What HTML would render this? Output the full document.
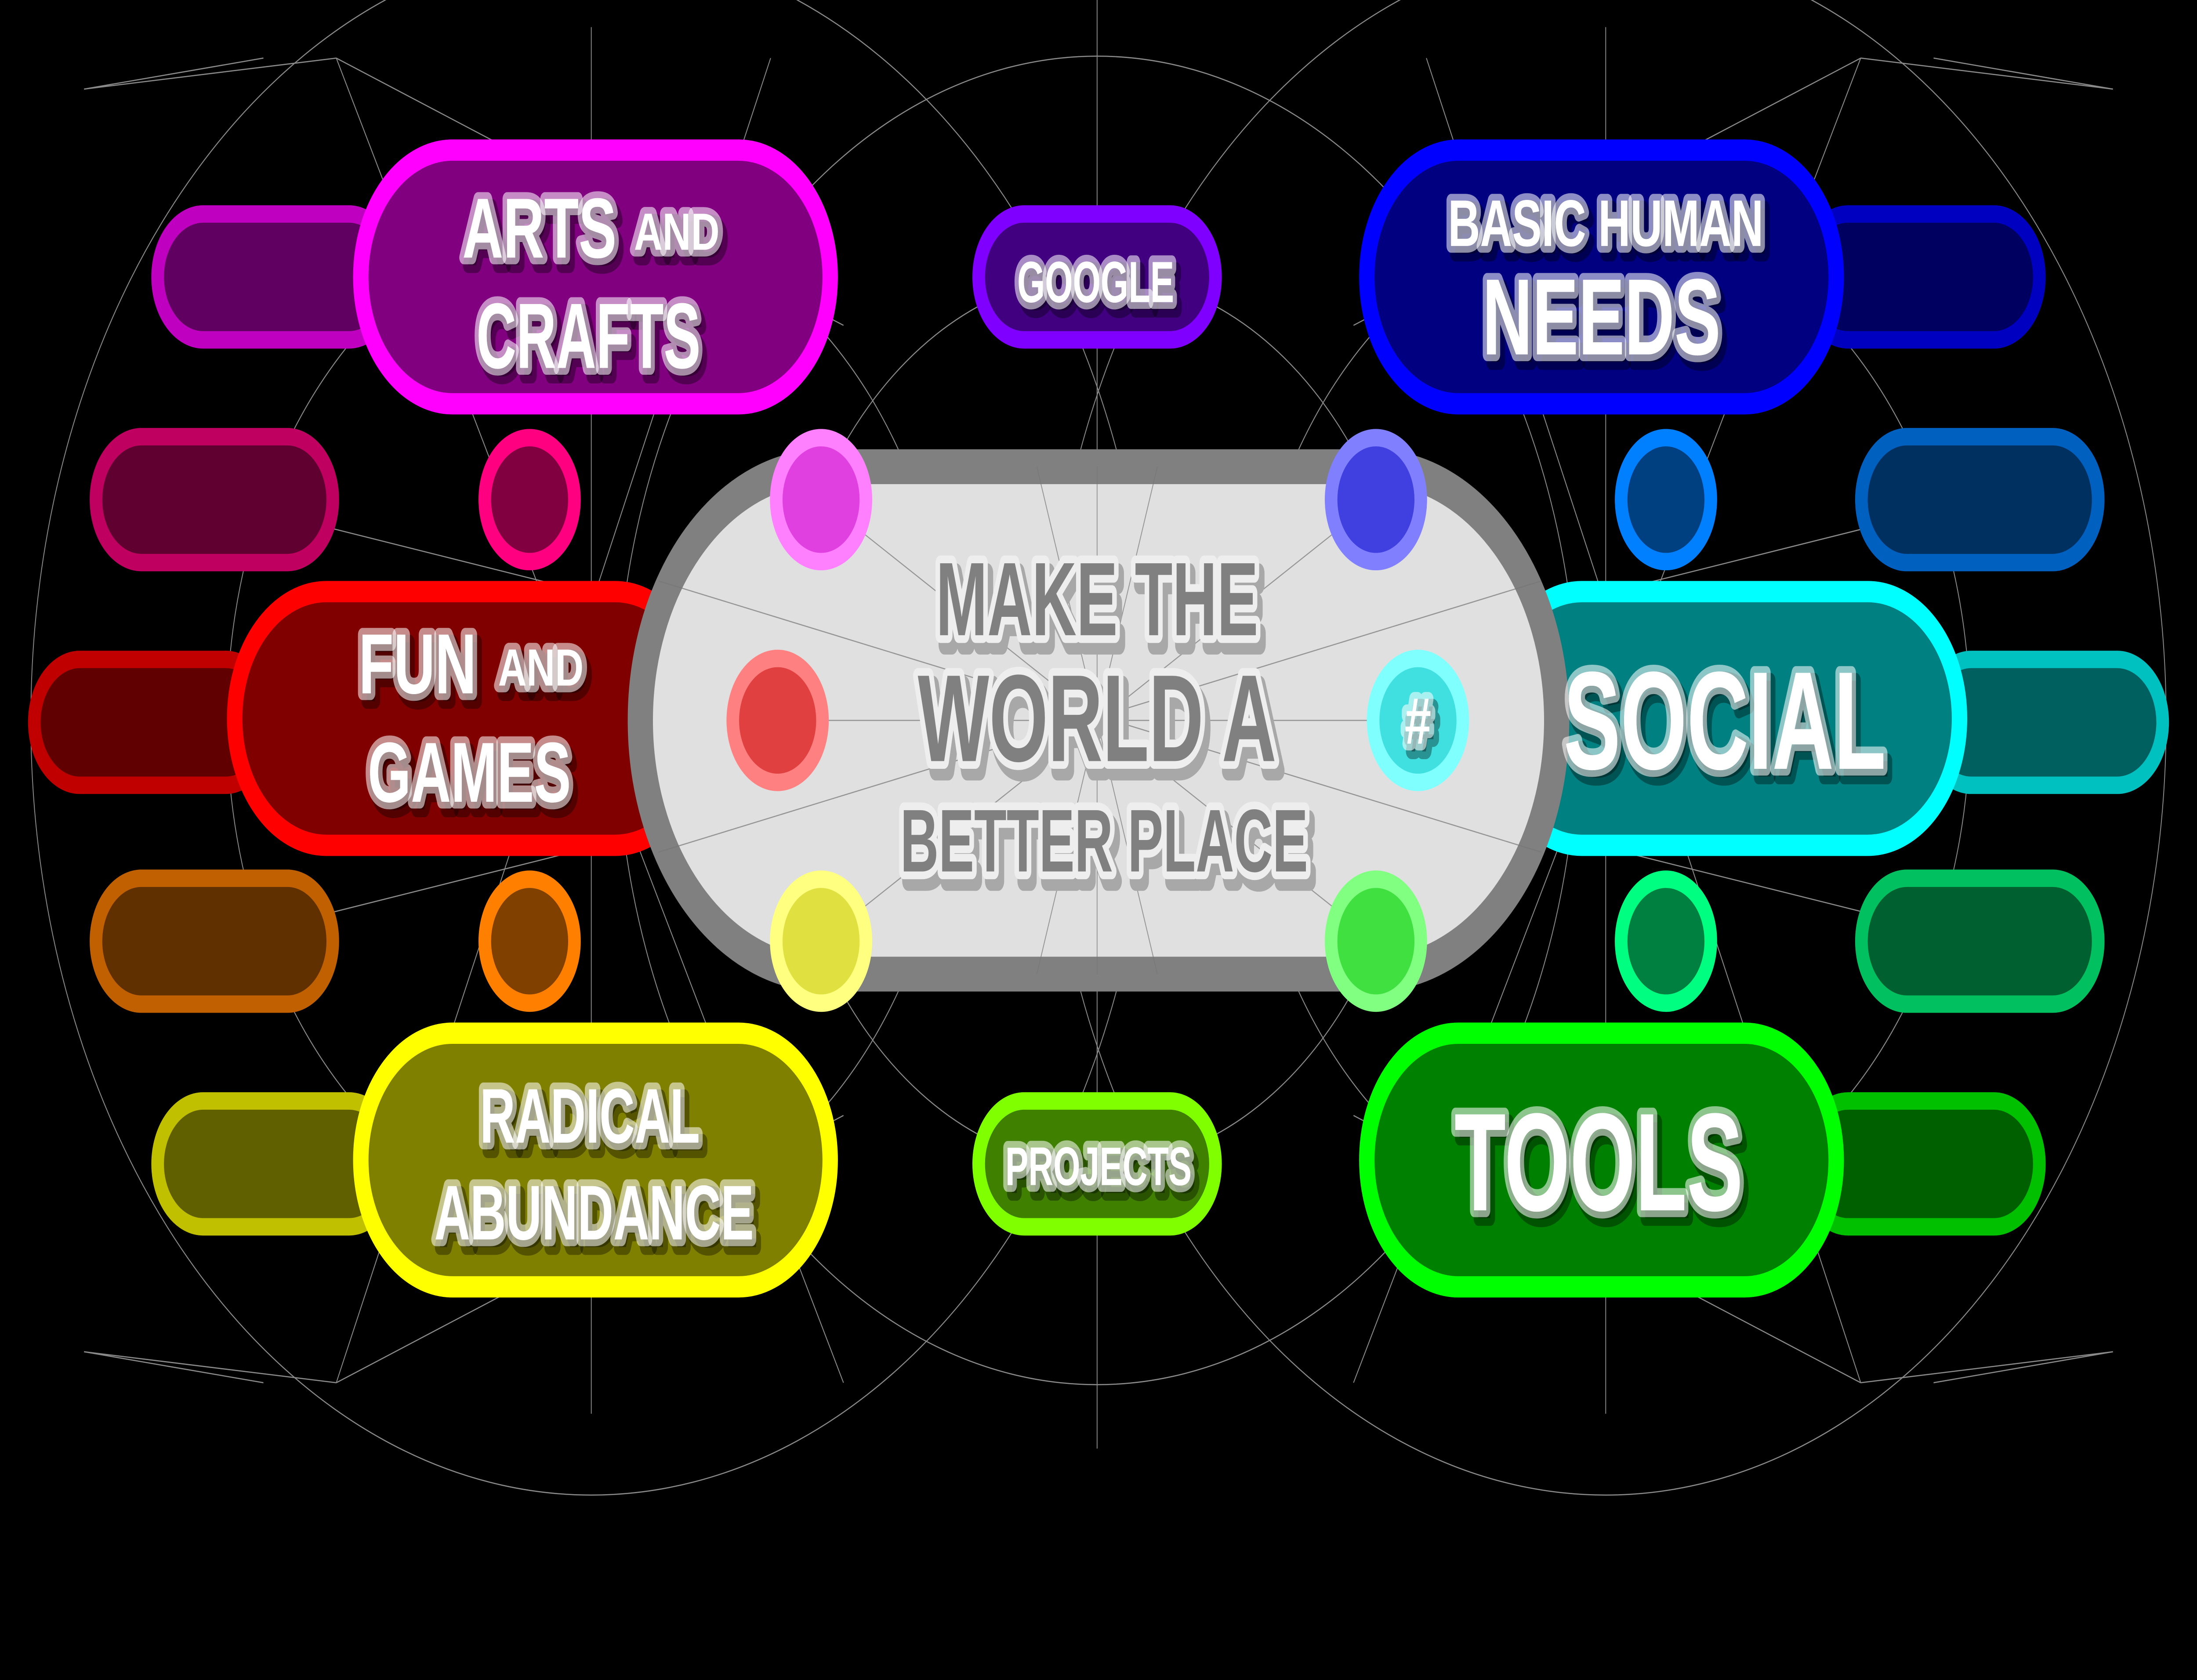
<!DOCTYPE html>
<html><head><meta charset="utf-8"><style>
html,body{margin:0;padding:0;background:#000;width:100%;height:100%;overflow:hidden;}
svg{display:block;width:100vw;height:100vh;}
text{font-family:"Liberation Sans",sans-serif;font-weight:bold;text-anchor:middle;}
.s{stroke-linejoin:round;}
</style></head><body>
<svg viewBox="0 0 1568 867.5" preserveAspectRatio="none" xmlns="http://www.w3.org/2000/svg">
<rect width="1568" height="868" fill="#000"/>
<g fill="none" stroke="#8a8a8a" stroke-width="0.6">
<circle cx="422" cy="372" r="400"/>
<circle cx="1146" cy="372" r="400"/>
<circle cx="783" cy="372" r="343"/>
<circle cx="783" cy="372" r="230"/>
<circle cx="422" cy="372" r="260"/>
<circle cx="1146" cy="372" r="260"/>
<line x1="422" y1="14" x2="422" y2="730"/>
<line x1="1146" y1="14" x2="1146" y2="730"/>
<line x1="783" y1="0" x2="783" y2="748"/>
<line x1="60" y1="46" x2="240" y2="30"/><line x1="60" y1="46" x2="188" y2="30"/>
<line x1="1508" y1="46" x2="1328" y2="30"/><line x1="1508" y1="46" x2="1380" y2="30"/>
<line x1="60" y1="698" x2="240" y2="714"/><line x1="60" y1="698" x2="188" y2="714"/>
<line x1="1508" y1="698" x2="1328" y2="714"/><line x1="1508" y1="698" x2="1380" y2="714"/>
<line x1="240" y1="30" x2="602" y2="168"/><line x1="1328" y1="30" x2="966" y2="168"/>
<line x1="240" y1="714" x2="602" y2="576"/><line x1="1328" y1="714" x2="966" y2="576"/>
<line x1="240" y1="30" x2="602" y2="714"/><line x1="1328" y1="30" x2="966" y2="714"/>
<line x1="550" y1="30" x2="240" y2="714"/><line x1="1018" y1="30" x2="1328" y2="714"/>
<line x1="155" y1="258" x2="783" y2="372"/><line x1="1413" y1="258" x2="783" y2="372"/>
<line x1="155" y1="486" x2="783" y2="372"/><line x1="1413" y1="486" x2="783" y2="372"/>
</g>
<g stroke-width="9">
<rect x="68.5" y="225.5" width="169" height="65" rx="32.5" fill="#600030" stroke="#c00060"/>
<rect x="1328.5" y="225.5" width="169" height="65" rx="32.5" fill="#003060" stroke="#0060c0"/>
<rect x="68.5" y="453.5" width="169" height="65" rx="32.5" fill="#603000" stroke="#c06000"/>
<rect x="1328.5" y="453.5" width="169" height="65" rx="32.5" fill="#006030" stroke="#00c060"/>
<circle cx="378" cy="258" r="32" fill="#800040" stroke="#ff0080"/>
<circle cx="1189" cy="258" r="32" fill="#004080" stroke="#0080ff"/>
<circle cx="378" cy="486" r="32" fill="#804000" stroke="#ff8000"/>
<circle cx="1189" cy="486" r="32" fill="#008040" stroke="#00ff80"/>
<rect x="112.5" y="110.5" width="169" height="65" rx="32.5" fill="#600060" stroke="#c000c0"/>
<rect x="1286.5" y="110.5" width="169" height="65" rx="32.5" fill="#000060" stroke="#0000c0"/>
<rect x="24.5" y="340.5" width="169" height="65" rx="32.5" fill="#600000" stroke="#c00000"/>
<rect x="1374.5" y="340.5" width="169" height="65" rx="32.5" fill="#006060" stroke="#00c0c0"/>
<rect x="112.5" y="568.5" width="169" height="65" rx="32.5" fill="#606000" stroke="#c0c000"/>
<rect x="1286.5" y="568.5" width="169" height="65" rx="32.5" fill="#006000" stroke="#00c000"/>
<rect x="698.5" y="110.5" width="169" height="65" rx="32.5" fill="#400080" stroke="#8000ff"/>
<rect x="698.5" y="568.5" width="169" height="65" rx="32.5" fill="#408000" stroke="#80ff00"/>
</g>
<g stroke-width="11">
<rect x="257.5" y="77.5" width="335" height="131" rx="65.5" fill="#800080" stroke="#ff00ff"/>
<rect x="975.5" y="77.5" width="335" height="131" rx="65.5" fill="#000080" stroke="#0000ff"/>
<rect x="167.5" y="305.5" width="337" height="131" rx="65.5" fill="#800000" stroke="#ff0000"/>
<rect x="1063.5" y="305.5" width="335" height="131" rx="65.5" fill="#008080" stroke="#00ffff"/>
<rect x="257.5" y="533.5" width="335" height="131" rx="65.5" fill="#808000" stroke="#ffff00"/>
<rect x="975.5" y="533.5" width="335" height="131" rx="65.5" fill="#008000" stroke="#00ff00"/>
</g>
<rect x="457" y="241" width="654" height="262" rx="131" fill="#e0e0e0" stroke="#808080" stroke-width="18"/>
<g fill="none" stroke="#777" stroke-width="0.6" opacity="0.7">
<line x1="586" y1="258" x2="982" y2="486"/><line x1="982" y1="258" x2="586" y2="486"/>
<line x1="555" y1="372" x2="1012" y2="372"/><line x1="783" y1="241" x2="783" y2="503"/>
<line x1="740" y1="241" x2="826" y2="503"/><line x1="826" y1="241" x2="740" y2="503"/>
<line x1="470" y1="300" x2="1100" y2="440"/><line x1="470" y1="440" x2="1100" y2="300"/>
</g>
<g stroke-width="9">
<circle cx="586" cy="258" r="32" fill="#e040e0" stroke="#ff80ff"/>
<circle cx="555" cy="372" r="32" fill="#e04040" stroke="#ff8080"/>
<circle cx="586" cy="486" r="32" fill="#e0e040" stroke="#ffff80"/>
<circle cx="982" cy="258" r="32" fill="#4040e0" stroke="#8080ff"/>
<circle cx="1012" cy="372" r="32" fill="#40e0e0" stroke="#80ffff"/>
<circle cx="982" cy="486" r="32" fill="#40e040" stroke="#80ff80"/>
</g>
<g class="s">
<g fill="#000" fill-opacity="0.35" stroke="#000" stroke-opacity="0.35" stroke-width="8" transform="translate(3,4)">
<text x="385" y="133" font-size="44" textLength="110" lengthAdjust="spacingAndGlyphs">ARTS</text>
<text x="483" y="129" font-size="27" textLength="61" lengthAdjust="spacingAndGlyphs">AND</text>
<text x="420" y="190" font-size="48" textLength="160" lengthAdjust="spacingAndGlyphs">CRAFTS</text>
<text x="1146" y="127" font-size="34" textLength="225" lengthAdjust="spacingAndGlyphs">BASIC HUMAN</text>
<text x="1143" y="183" font-size="56" textLength="170" lengthAdjust="spacingAndGlyphs">NEEDS</text>
<text x="298" y="358" font-size="44" textLength="84" lengthAdjust="spacingAndGlyphs">FUN</text>
<text x="386" y="354" font-size="27" textLength="61" lengthAdjust="spacingAndGlyphs">AND</text>
<text x="335" y="414" font-size="44" textLength="145" lengthAdjust="spacingAndGlyphs">GAMES</text>
<text x="1231" y="397" font-size="72" textLength="230" lengthAdjust="spacingAndGlyphs">SOCIAL</text>
<text x="421" y="590" font-size="40" textLength="157" lengthAdjust="spacingAndGlyphs">RADICAL</text>
<text x="424" y="640" font-size="40" textLength="228" lengthAdjust="spacingAndGlyphs">ABUNDANCE</text>
<text x="1141" y="625" font-size="72" textLength="206" lengthAdjust="spacingAndGlyphs">TOOLS</text>
<text x="782" y="156" font-size="30" textLength="112" lengthAdjust="spacingAndGlyphs">GOOGLE</text>
<text x="784" y="612" font-size="28" textLength="133" lengthAdjust="spacingAndGlyphs">PROJECTS</text>
<text x="1012" y="384" font-size="34">#</text>
</g>
<g fill="#fff" stroke="#fff" stroke-opacity="0.55" stroke-width="7">
<text x="385" y="133" font-size="44" textLength="110" lengthAdjust="spacingAndGlyphs">ARTS</text>
<text x="483" y="129" font-size="27" textLength="61" lengthAdjust="spacingAndGlyphs">AND</text>
<text x="420" y="190" font-size="48" textLength="160" lengthAdjust="spacingAndGlyphs">CRAFTS</text>
<text x="1146" y="127" font-size="34" textLength="225" lengthAdjust="spacingAndGlyphs">BASIC HUMAN</text>
<text x="1143" y="183" font-size="56" textLength="170" lengthAdjust="spacingAndGlyphs">NEEDS</text>
<text x="298" y="358" font-size="44" textLength="84" lengthAdjust="spacingAndGlyphs">FUN</text>
<text x="386" y="354" font-size="27" textLength="61" lengthAdjust="spacingAndGlyphs">AND</text>
<text x="335" y="414" font-size="44" textLength="145" lengthAdjust="spacingAndGlyphs">GAMES</text>
<text x="1231" y="397" font-size="72" textLength="230" lengthAdjust="spacingAndGlyphs">SOCIAL</text>
<text x="421" y="590" font-size="40" textLength="157" lengthAdjust="spacingAndGlyphs">RADICAL</text>
<text x="424" y="640" font-size="40" textLength="228" lengthAdjust="spacingAndGlyphs">ABUNDANCE</text>
<text x="1141" y="625" font-size="72" textLength="206" lengthAdjust="spacingAndGlyphs">TOOLS</text>
<text x="782" y="156" font-size="30" textLength="112" lengthAdjust="spacingAndGlyphs">GOOGLE</text>
<text x="784" y="612" font-size="28" textLength="133" lengthAdjust="spacingAndGlyphs">PROJECTS</text>
<text x="1012" y="384" font-size="34">#</text>
</g>
<g fill="#fff">
<text x="385" y="133" font-size="44" textLength="110" lengthAdjust="spacingAndGlyphs">ARTS</text>
<text x="483" y="129" font-size="27" textLength="61" lengthAdjust="spacingAndGlyphs">AND</text>
<text x="420" y="190" font-size="48" textLength="160" lengthAdjust="spacingAndGlyphs">CRAFTS</text>
<text x="1146" y="127" font-size="34" textLength="225" lengthAdjust="spacingAndGlyphs">BASIC HUMAN</text>
<text x="1143" y="183" font-size="56" textLength="170" lengthAdjust="spacingAndGlyphs">NEEDS</text>
<text x="298" y="358" font-size="44" textLength="84" lengthAdjust="spacingAndGlyphs">FUN</text>
<text x="386" y="354" font-size="27" textLength="61" lengthAdjust="spacingAndGlyphs">AND</text>
<text x="335" y="414" font-size="44" textLength="145" lengthAdjust="spacingAndGlyphs">GAMES</text>
<text x="1231" y="397" font-size="72" textLength="230" lengthAdjust="spacingAndGlyphs">SOCIAL</text>
<text x="421" y="590" font-size="40" textLength="157" lengthAdjust="spacingAndGlyphs">RADICAL</text>
<text x="424" y="640" font-size="40" textLength="228" lengthAdjust="spacingAndGlyphs">ABUNDANCE</text>
<text x="1141" y="625" font-size="72" textLength="206" lengthAdjust="spacingAndGlyphs">TOOLS</text>
<text x="782" y="156" font-size="30" textLength="112" lengthAdjust="spacingAndGlyphs">GOOGLE</text>
<text x="784" y="612" font-size="28" textLength="133" lengthAdjust="spacingAndGlyphs">PROJECTS</text>
<text x="1012" y="384" font-size="34">#</text>
</g>
<g fill="#a8a8a8" stroke="#a8a8a8" stroke-width="10" transform="translate(3,5)">
<text x="783" y="328" font-size="54" textLength="230" lengthAdjust="spacingAndGlyphs">MAKE THE</text>
<text x="783" y="393" font-size="64" textLength="256" lengthAdjust="spacingAndGlyphs">WORLD A</text>
<text x="788" y="450" font-size="46" textLength="291" lengthAdjust="spacingAndGlyphs">BETTER PLACE</text>
</g>
<g fill="#808080" stroke="#eeeeee" stroke-width="8">
<text x="783" y="328" font-size="54" textLength="230" lengthAdjust="spacingAndGlyphs">MAKE THE</text>
<text x="783" y="393" font-size="64" textLength="256" lengthAdjust="spacingAndGlyphs">WORLD A</text>
<text x="788" y="450" font-size="46" textLength="291" lengthAdjust="spacingAndGlyphs">BETTER PLACE</text>
</g>
<g fill="#808080">
<text x="783" y="328" font-size="54" textLength="230" lengthAdjust="spacingAndGlyphs">MAKE THE</text>
<text x="783" y="393" font-size="64" textLength="256" lengthAdjust="spacingAndGlyphs">WORLD A</text>
<text x="788" y="450" font-size="46" textLength="291" lengthAdjust="spacingAndGlyphs">BETTER PLACE</text>
</g>
</g>
</svg>
</body></html>
